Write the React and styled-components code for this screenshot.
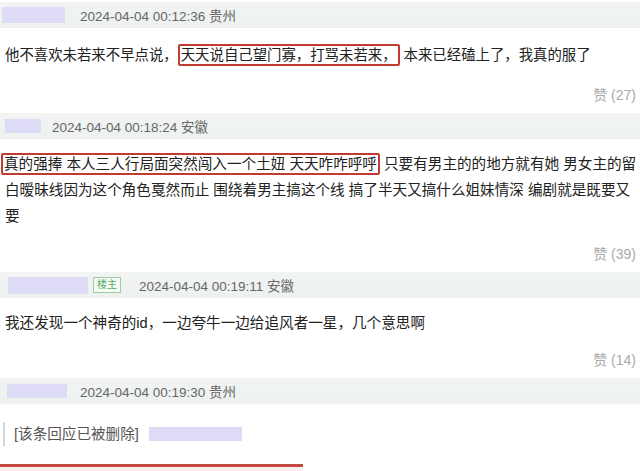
import React from "react";
import styled, { createGlobalStyle } from "styled-components";

const GlobalStyle = createGlobalStyle`
  body {
    margin: 0;
    background: #ffffff;
    font-family: "Liberation Sans", "Noto Sans CJK SC", sans-serif;
    overflow: hidden;
  }
`;

const Page = styled.div`
  width: 640px;
  height: 471px;
  padding-top: 2px;
  box-sizing: border-box;
  overflow: hidden;
`;

const Comment = styled.div`
  padding-bottom: 8px;
`;

const Header = styled.div`
  height: 26px;
  background: linear-gradient(#f1f4f2, #edf1ef);
  display: flex;
  align-items: center;
  padding-left: ${(p) => p.$inset}px;
`;

const NameBlock = styled.div`
  width: ${(p) => p.$w}px;
  height: ${(p) => p.$h}px;
  background: #dddbf6;
  margin-right: ${(p) => p.$gap}px;
`;

const Badge = styled.span`
  font-size: 10px;
  line-height: 14px;
  color: #5fa86d;
  border: 1px solid #9ccba5;
  background: #f3fbf4;
  padding: 0 3px;
  margin-right: 18px;
`;

const Meta = styled.span`
  font-size: 13.5px;
  color: #676767;
`;

const Body = styled.div`
  margin-top: ${(p) => p.$top || 14}px;
  padding: 0 0 0 5px;
  font-size: ${(p) => p.$size || 14.6}px;
  line-height: 26px;
  color: #222;
`;

const Mark = styled.span`
  border: 2px solid #c23b33;
  border-radius: 2px;
  padding: 1px 1px;
  margin-left: ${(p) => (p.$flush ? -4 : 0)}px;
`;

const Deleted = styled.div`
  margin: 18px 0 0 3px;
  border-left: 2px solid #d4d4d4;
  padding-left: 9px;
  display: flex;
  align-items: center;
  gap: 10px;
  font-size: 14.6px;
  line-height: 24px;
  color: #555;
`;

const Hidden = styled.span`
  width: 93px;
  height: 14px;
  background: #dddbf6;
`;

const Footer = styled.div`
  margin-top: ${(p) => p.$gap || 16}px;
  text-align: right;
  padding-right: 4px;
  font-size: 14px;
  line-height: 20px;
  color: #a9a9a9;
`;

const NextBox = styled.div`
  margin-top: 18px;
  width: 303px;
  height: 6px;
  border-top: 3px solid #c4483f;
  background: #fbeeee;
`;

const comments = [
  {
    name: { w: 63, h: 16, gap: 15, inset: 2 },
    meta: "2024-04-04 00:12:36 贵州",
    size: 14.4,
    gap: 17,
    body: (
      <>
        他不喜欢未若来不早点说，<Mark>天天说自己望门寡，打骂未若来，</Mark> 本来已经磕上了，我真的服了
      </>
    ),
    likes: 27,
  },
  {
    name: { w: 36, h: 14, gap: 11, inset: 5 },
    meta: "2024-04-04 00:18:24 安徽",
    top: 12,
    gap: 15,
    body: (
      <>
        <Mark $flush>真的强捧 本人三人行局面突然闯入一个土妞 天天咋咋呼呼</Mark> 只要有男主的的地方就有她 男女主的留白暧昧线因为这个角色戛然而止 围绕着男主搞这个线 搞了半天又搞什么姐妹情深 编剧就是既要又要
      </>
    ),
    likes: 39,
  },
  {
    name: { w: 80, h: 17, gap: 5, inset: 8 },
    badge: "楼主",
    meta: "2024-04-04 00:19:11 安徽",
    top: 12,
    gap: 14,
    body: <>我还发现一个神奇的id，一边夸牛一边给追风者一星，几个意思啊</>,
    likes: 14,
  },
];

const App = () => (
  <Page>
    <GlobalStyle />
    {comments.map((c, i) => (
      <Comment key={i}>
        <Header $inset={c.name.inset}>
          <NameBlock $w={c.name.w} $h={c.name.h} $gap={c.name.gap} />
          {c.badge && <Badge>{c.badge}</Badge>}
          <Meta>{c.meta}</Meta>
        </Header>
        <Body $size={c.size} $top={c.top}>{c.body}</Body>
        <Footer $gap={c.gap}>赞 ({c.likes})</Footer>
      </Comment>
    ))}
    <Comment>
      <Header $inset={7}>
        <NameBlock $w={60} $h={14} $gap={13} />
        <Meta>2024-04-04 00:19:30 贵州</Meta>
      </Header>
      <Deleted>
        [该条回应已被删除]
        <Hidden />
      </Deleted>
      <NextBox />
    </Comment>
  </Page>
);

export default App;
